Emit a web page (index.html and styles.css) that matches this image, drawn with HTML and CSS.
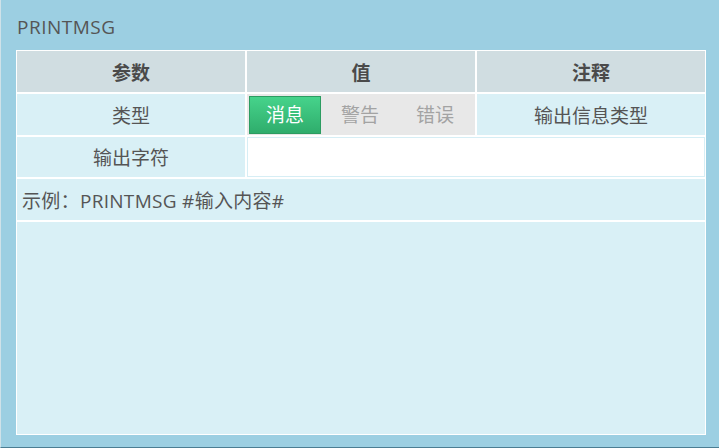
FILE: index.html
```html
<!DOCTYPE html>
<html lang="zh-CN">
<head>
    <meta charset="UTF-8">
    <title>PRINTMSG</title>
    <link rel="stylesheet" href="styles.css">
</head>
<body>
    <div class="panel">
        <div class="panel_title">PRINTMSG</div>
        <table class="param_tbl">
            <tr>
                <th>参数</th>
                <th>值</th>
                <th>注释</th>
            </tr>
            <tr>
                <td>类型</td>
                <td class="cs_btns">
                    <div class="btn_group">
                        <span class="btn on">消息</span>
                        <span class="btn">警告</span>
                        <span class="btn">错误</span>
                    </div>
                </td>
                <td>输出信息类型</td>
            </tr>
            <tr class="cs_row_input">
                <td>输出字符</td>
                <td colspan="2" class="cs_input"><input type="text"></td>
            </tr>
            <tr>
                <td colspan="3" class="cs_example">示例：PRINTMSG #输入内容#</td>
            </tr>
            <tr>
                <td colspan="3" class="cs_blank"></td>
            </tr>
        </table>
    </div>
</body>
</html>
```

FILE: styles.css
```css
body {
    margin: 0;
    font-family: "Open Sans", "Noto Sans CJK SC", sans-serif;
    font-size: 19px;
    color: #555;
}
.panel {
    width: 719px;
    height: 448px;
    box-sizing: border-box;
    background-color: #9ccfe2;
    border-left: 1px solid #cfe2e9;
    border-bottom: 1px solid #4b7d92;
    padding: 14px 0 0 15px;
}
.panel_title {
    height: 26px;
    line-height: 26px;
    margin-bottom: 10px;
    padding-left: 1px;
    letter-spacing: 0.5px;
}
.param_tbl {
    width: 690px;
    border-collapse: separate;
    border-spacing: 0;
    table-layout: fixed;
}
.param_tbl th,
.param_tbl td {
    border: 1px solid #fff;
    height: 43px;
    padding: 0;
    text-align: center;
    background-color: #d9f0f6;
    box-sizing: border-box;
}
.param_tbl th {
    background-color: #d0dde1;
    font-weight: bold;
    color: #4a4a4a;
}
.param_tbl .cs_row_input td {
    height: 42px;
}
.cs_btns {
    background-color: #e8e8e8 !important;
    padding: 0 2px !important;
}
.btn_group {
    display: flex;
    gap: 3px;
}
.btn {
    width: 72px;
    height: 38px;
    line-height: 38px;
    box-sizing: border-box;
    color: #a3a3a3;
    text-align: center;
}
.btn.on {
    color: #fff;
    background: linear-gradient(#46d38b, #2fad6c);
    border: 1px solid #2c9c61;
    line-height: 36px;
}
.cs_input {
    background-color: #fff !important;
}
.cs_input input {
    display: block;
    width: 100%;
    height: 40px;
    box-sizing: border-box;
    border: 1px solid #d6eef5;
    margin: 0;
    outline: none;
}
.cs_example {
    text-align: left !important;
    padding-left: 5px !important;
    letter-spacing: 0.3px;
}
.param_tbl td.cs_blank {
    height: 214px;
}
```
